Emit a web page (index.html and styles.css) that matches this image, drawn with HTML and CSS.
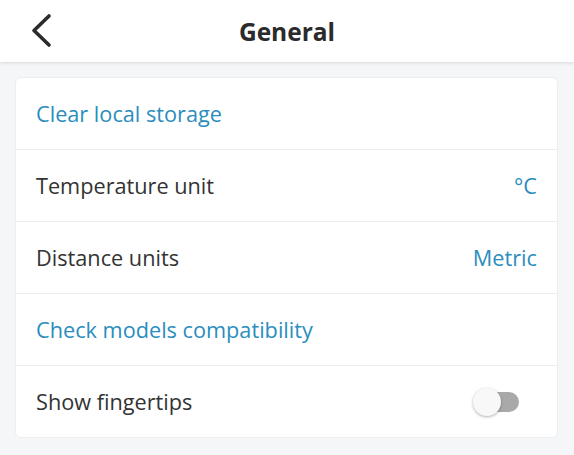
FILE: index.html
```html
<!DOCTYPE html>
<html lang="en">
<head>
<meta charset="utf-8">
<title>General</title>
<link rel="stylesheet" href="styles.css">
</head>
<body>
<header class="topbar">
  <button class="back" aria-label="Back">
    <svg width="24" height="36" viewBox="0 0 24 36"><path d="M19 3 L4 17.5 L19 32" fill="none" stroke="#2b2b2b" stroke-width="3.6" stroke-linecap="round" stroke-linejoin="round"/></svg>
  </button>
  <h1 class="title">General</h1>
</header>
<main class="content">
  <section class="card">
    <div class="row"><span class="link">Clear local storage</span></div>
    <div class="row"><span class="label">Temperature unit</span><span class="value">°C</span></div>
    <div class="row"><span class="label">Distance units</span><span class="value">Metric</span></div>
    <div class="row"><span class="link">Check models compatibility</span></div>
    <div class="row"><span class="label">Show fingertips</span><span class="toggle"><span class="track"></span><span class="thumb"></span></span></div>
  </section>
</main>
</body>
</html>
```
FILE: styles.css
```css
* { box-sizing: border-box; }
html, body { margin: 0; padding: 0; }
body {
  background: #f5f6f8;
  font-family: "Open Sans", "Noto Sans", sans-serif;
  width: 574px;
  height: 455px;
  overflow: hidden;
}
.topbar {
  height: 62px;
  background: #ffffff;
  box-shadow: 0 1px 4px rgba(0,0,0,0.12);
  display: flex;
  align-items: center;
  justify-content: center;
  position: relative;
}
.back {
  position: absolute;
  left: 30px;
  top: 13px;
  border: 0;
  background: none;
  padding: 0;
  width: 24px;
  height: 36px;
}
.back svg { display: block; }
.title {
  margin: 0;
  font-size: 24.5px;
  font-weight: 700;
  color: #2b2b2b;
}
.content {
  padding: 15px 16px 0 15px;
}
.card {
  background: #ffffff;
  border-radius: 6px;
  border: 1px solid #eceef1;
  overflow: hidden;
}
.row {
  height: 72px;
  display: flex;
  align-items: center;
  justify-content: space-between;
  padding: 0 20px 0 20px;
  border-top: 1px solid #ebecee;
  font-size: 21.7px;
}
.row:first-child { border-top: 0; height: 71px; }
.link, .value { color: #2a8dbd; }
.label { color: #333333; }
.toggle {
  position: relative;
  width: 50px;
  height: 30px;
  margin-right: 14px;
}
.track {
  position: absolute;
  left: 8px;
  top: 5px;
  width: 38px;
  height: 20px;
  border-radius: 10px;
  background: #a9a9a9;
}
.thumb {
  position: absolute;
  left: 0;
  top: 1px;
  width: 28px;
  height: 28px;
  border-radius: 50%;
  background: #f8f8f8;
  box-shadow: 0 1px 3px rgba(0,0,0,0.3);
}
```
